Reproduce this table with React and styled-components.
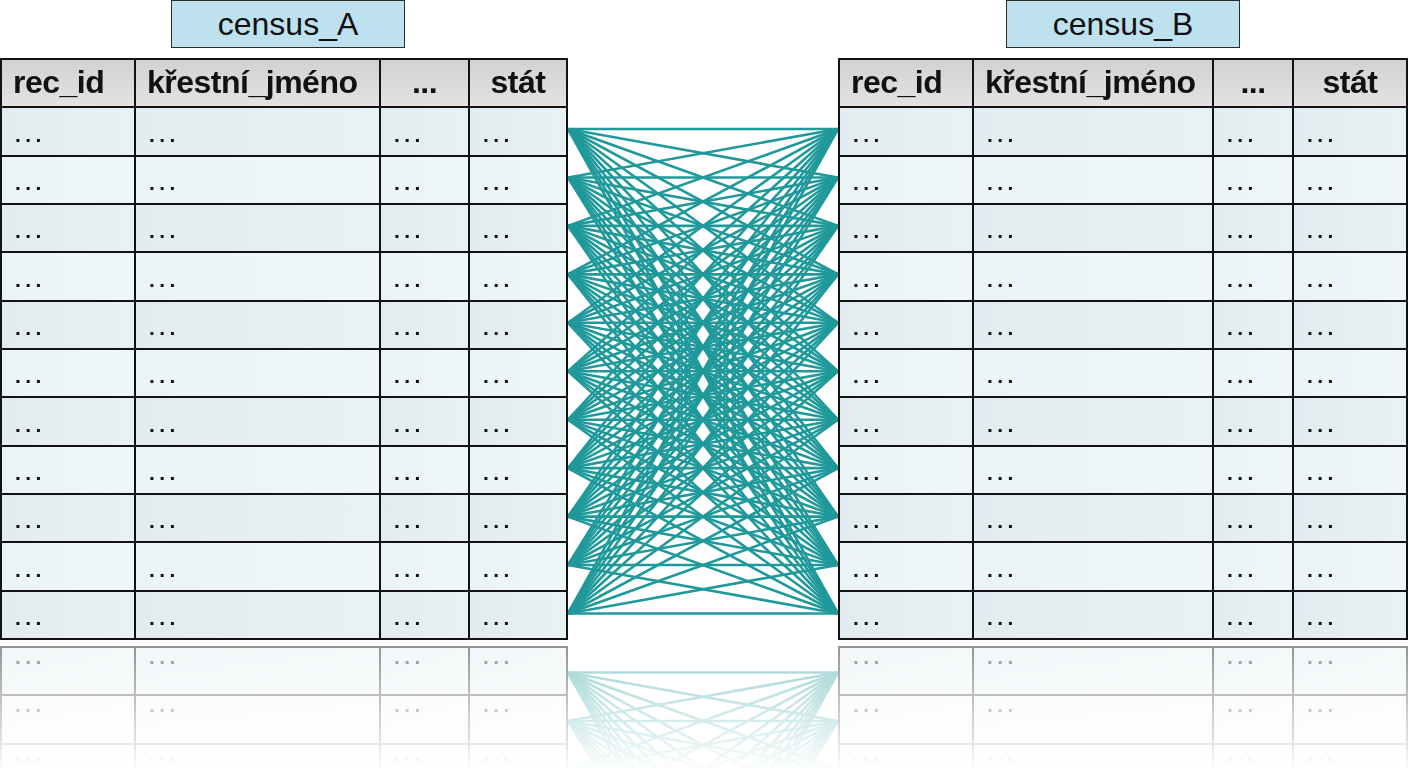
import React from "react";
import styled, { createGlobalStyle } from "styled-components";

const Global = createGlobalStyle`
  html, body { margin: 0; padding: 0; background: #ffffff; }
  body { font-family: "Liberation Sans", Arial, sans-serif; color: #111; }
`;

const Page = styled.div`
  width: 1408px;
  height: 768px;
  overflow: hidden;
  display: grid;
  grid-template-columns: 568px 270px 570px;
  grid-template-rows: 48px 582px;
  row-gap: 10px;
`;

const Label = styled.div`
  grid-row: 1;
  grid-column: ${(p) => p.$col};
  justify-self: center;
  transform: translateX(${(p) => p.$shift || 0}px);
  width: 234px;
  height: 48px;
  box-sizing: border-box;
  background: #bee1ef;
  border: 1.5px solid #2a2a2a;
  display: flex;
  align-items: center;
  justify-content: center;
  font-size: 32px;
  padding-top: 1px;
`;

const reflect = `-webkit-box-reflect: below 6px linear-gradient(to bottom, transparent 78%, rgba(255,255,255,0.45));`;

const Table = styled.div`
  grid-row: 2;
  grid-column: ${(p) => p.$col};
  display: grid;
  grid-template-columns: ${(p) => p.$cols};
  grid-template-rows: repeat(12, 1fr);
  gap: 2px;
  background: #121212;
  border: 2px solid #121212;
  box-sizing: border-box;
  height: 582px;
  ${reflect}
`;

const HeadCell = styled.div`
  background: linear-gradient(to bottom, #d2d2d2, #e2e2e2);
  display: flex;
  align-items: center;
  justify-content: ${(p) => (p.$center ? "center" : "flex-start")};
  padding-left: ${(p) => (p.$center ? 0 : 11)}px;
  font-weight: bold;
  font-size: 32px;
  letter-spacing: -0.5px;
  line-height: 1;
  padding-bottom: 2px;
  white-space: nowrap;
  overflow: hidden;
`;

const Cell = styled.div`
  background: ${(p) =>
    p.$alt
      ? "linear-gradient(to right, #eaf3f6, #f0f7f9)"
      : "linear-gradient(to right, #e2ecf0, #e8f1f4)"};
  display: flex;
  align-items: flex-end;
  padding-left: 13px;
  padding-bottom: 10px;
  box-sizing: border-box;
  font-size: 21px;
  font-weight: bold;
  letter-spacing: 4.4px;
  line-height: 1;
`;

const Links = styled.svg`
  grid-row: 2;
  grid-column: 2;
  display: block;
  width: 270px;
  height: 582px;
  ${reflect}
`;

const headers = [
  { t: "rec_id" },
  { t: "křestní_jméno" },
  { t: "...", c: true },
  { t: "stát", c: true },
];

function DataTable({ col, cols }) {
  const cells = [];
  headers.forEach((h, i) =>
    cells.push(
      <HeadCell key={"h" + i} $center={h.c}>
        {h.t}
      </HeadCell>
    )
  );
  for (let r = 0; r < 11; r++) {
    for (let c = 0; c < 4; c++) {
      cells.push(
        <Cell key={r + "-" + c} $alt={r % 2 === 1}>
          ...
        </Cell>
      );
    }
  }
  return (
    <Table $col={col} $cols={cols}>
      {cells}
    </Table>
  );
}

export default function App() {
  const ys = Array.from({ length: 11 }, (_, i) => 71 + 48.45 * i);
  const lines = [];
  ys.forEach((a, i) =>
    ys.forEach((b, j) =>
      lines.push(<line key={i + "_" + j} x1={0} y1={a} x2={270} y2={b} />)
    )
  );
  return (
    <>
      <Global />
      <Page>
        <Label $col={1} $shift={4}>census_A</Label>
        <Label $col={3}>census_B</Label>
        <DataTable col={1} cols="132px 243px 87px 96px" />
        <Links viewBox="0 0 270 582">
          <g stroke="#20999b" strokeWidth="2.6" fill="none">
            {lines}
          </g>
        </Links>
        <DataTable col={3} cols="132px 238px 78px 112px" />
      </Page>
    </>
  );
}
